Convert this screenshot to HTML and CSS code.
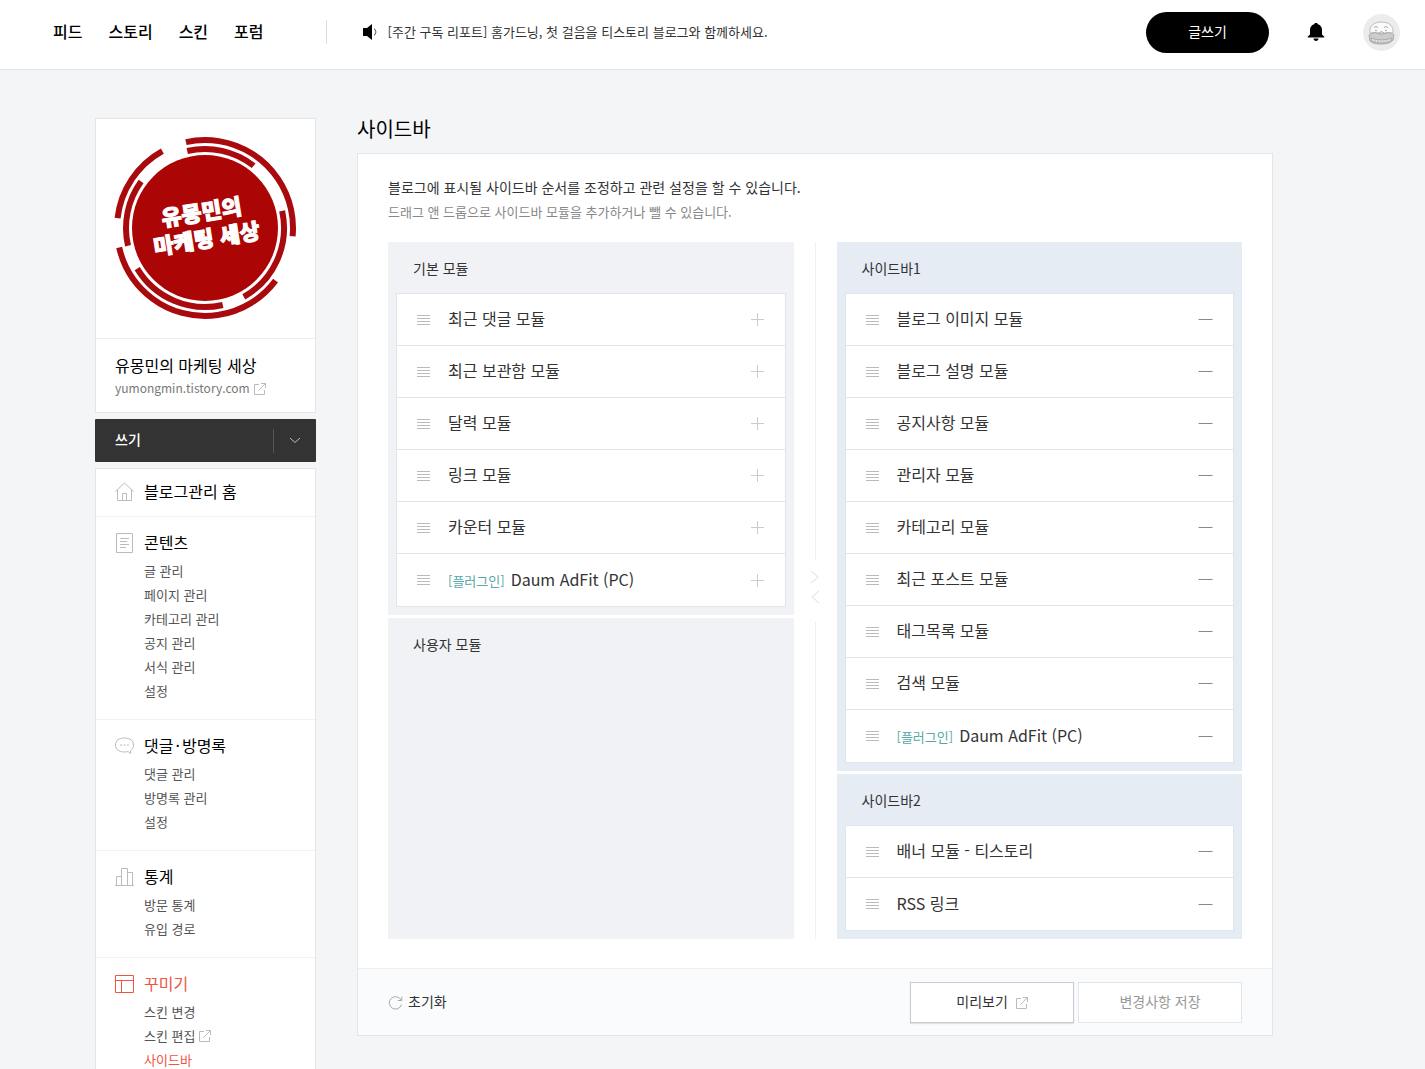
FILE: index.html
```html
<!DOCTYPE html>
<html lang="ko">
<head>
    <meta charset="UTF-8">
    <meta name="viewport" content="width=device-width, initial-scale=1.0">
    <title>사이드바</title>
    <link rel="stylesheet" href="styles.css">
</head>
<body>
    <svg class="icon-defs" aria-hidden="true">
        <symbol id="icon-grip" viewBox="0 0 13 12">
            <path d="M0 1.5h13M0 4.5h13M0 7.5h13M0 10.5h13" fill="none" stroke="currentColor"/>
        </symbol>
        <symbol id="icon-plus" viewBox="0 0 15 15">
            <path d="M7.5 1v13M1 7.5h13" fill="none" stroke="currentColor"/>
        </symbol>
        <symbol id="icon-minus" viewBox="0 0 15 15">
            <path d="M0.5 7.5h14" fill="none" stroke="currentColor"/>
        </symbol>
        <symbol id="icon-external" viewBox="0 0 12 12">
            <path d="M5 1.5H0.5v10h10V7M7 0.5h4.5V5M11.5 0.5L4.5 7.5" fill="none" stroke="currentColor"/>
        </symbol>
    </svg>

    <header class="header">
        <nav class="gnb">
            <a href="#">피드</a>
            <a href="#">스토리</a>
            <a href="#">스킨</a>
            <a href="#">포럼</a>
        </nav>
        <a href="#" class="notice">
            <svg class="icon-speaker" viewBox="0 0 17 16" width="17" height="16">
                <path d="M1 4h4l5-4v16l-5-4H1z" fill="#000"/>
                <path d="M12.5 4.5q3 3.5 0 7" fill="none" stroke="#555"/>
            </svg>
            [주간 구독 리포트] 홈가드닝, 첫 걸음을 티스토리 블로그와 함께하세요.
        </a>
        <button type="button" class="btn-post">글쓰기</button>
        <button type="button" class="btn-bell" aria-label="알림">
            <svg viewBox="0 0 18 20" width="18" height="20">
                <path d="M9 1c1 0 1.6.5 1.9 1.2C13.6 3 15 5.2 15 8v4.500l2.300 2.300v.7H.7v-.7L3 12.500V8c0-2.800 1.400-5 4.100-5.800C7.400 1.500 8 1 9 1z"/>
                <path d="M6.500 16.500h5c0 1.500-1 2.500-2.500 2.500s-2.500-1-2.500-2.500z"/>
            </svg>
        </button>
        <button type="button" class="btn-profile" aria-label="프로필">
            <svg viewBox="0 0 37 37" width="37" height="37">
                <circle cx="18.5" cy="18.5" r="18.5" fill="#ececec"/>
                <path d="M7 19c-1-7 4-11 11.500-11S31 12 30 19z" fill="#fafafa" stroke="#bbb"/>
                <path d="M6 21c2-2 5-3 8-2 3 1.500 6 1.500 9 0 3-1 6 0 8 2l-1 5c-3 3-6 4-12 4s-9-1-11-3z" fill="#ccc" stroke="#aaa"/>
                <path d="M8 24c7 2.500 14 2.500 21 0l-.5 3c-6 2.500-13 2.500-20 0z" fill="#e4e4e4" stroke="#aaa"/>
                <path d="M12 25.500v2.500M15 26v2.500M18 26.500V29M21 26.500V29M24 26v2.500M27 25.500v2" stroke="#bbb" fill="none"/>
                <path d="M11 13.500q2-2 4 0M21 13.500q2-2 4 0M12 16.500h2M22 16.500h2M16 19q2.500-3 5 0" stroke="#aaa" fill="none"/>
            </svg>
        </button>
    </header>

    <div class="container">
        <aside class="sidebar">
            <div class="blog-card">
                <svg class="blog-logo" viewBox="0 0 219 219">
                    <circle cx="109" cy="109" r="73" class="logo-disc"/>
                    <g class="logo-ring" transform="translate(109 109)">
                        <circle r="88" pathLength="360" stroke-dasharray="108 252" transform="rotate(-102.5)"/>
                        <circle r="88" pathLength="360" stroke-dasharray="54.5 305.5" transform="rotate(186.5)"/>
                        <circle r="88" pathLength="360" stroke-dasharray="130.5 229.5" transform="rotate(36.7)"/>
                        <circle r="79" pathLength="360" stroke-dasharray="51 309" transform="rotate(-103)"/>
                        <circle r="79" pathLength="360" stroke-dasharray="49 311" transform="rotate(167)"/>
                        <circle r="79" pathLength="360" stroke-dasharray="72 288" transform="rotate(77)"/>
                        <circle r="79" pathLength="360" stroke-dasharray="73 287" transform="rotate(-12.5)"/>
                    </g>
                    <g class="logo-text" transform="translate(109 109) rotate(-9)">
                        <text x="-1" y="-8">유몽민의</text>
                        <text x="0" y="19">마케팅 세상</text>
                    </g>
                </svg>
                <div class="blog-info">
                    <a href="#" class="blog-name">유몽민의 마케팅 세상</a>
                    <a href="#" class="blog-url">yumongmin.tistory.com
                        <svg class="icon-external"><use href="#icon-external"/></svg>
                    </a>
                </div>
            </div>

            <div class="write-bar">
                <a href="#" class="write-link">쓰기</a>
                <button type="button" class="write-more" aria-label="더보기">
                    <svg viewBox="0 0 12 7" width="12" height="7"><path d="M1 1l5 4.5L11 1" fill="none" stroke="#bbb"/></svg>
                </button>
            </div>

            <nav class="menu">
                <div class="menu-group menu-home">
                    <a href="#" class="menu-title">
                        <svg class="menu-icon" viewBox="0 0 19 20"><path d="M0.5 9.5L9.5 1l9 8.5M2.5 8v10.5h14V8M7.5 18.5v-7h4v7"/></svg>
                        <span>블로그관리 홈</span>
                    </a>
                </div>
                <div class="menu-group">
                    <a href="#" class="menu-title">
                        <svg class="menu-icon" viewBox="0 0 19 20"><path d="M1.5 0.5h16v19h-16zM5 5.5h9M5 8.5h7M5 11.5h9M5 14.5h6"/></svg>
                        <span>콘텐츠</span>
                    </a>
                    <ul>
                        <li><a href="#">글 관리</a></li>
                        <li><a href="#">페이지 관리</a></li>
                        <li><a href="#">카테고리 관리</a></li>
                        <li><a href="#">공지 관리</a></li>
                        <li><a href="#">서식 관리</a></li>
                        <li><a href="#">설정</a></li>
                    </ul>
                </div>
                <div class="menu-group">
                    <a href="#" class="menu-title">
                        <svg class="menu-icon" viewBox="0 0 19 20"><path d="M9.5 2C4 2 .5 4.500.5 9s3.500 7 9 7c1.500 0 2.500-.2 3.500-.5l2.500 2v-3c2-1.200 3-3 3-5.500 0-4.500-3.500-7-9-7zM5 9h2M8.500 9h2M12 9h2"/></svg>
                        <span>댓글<i>·</i>방명록</span>
                    </a>
                    <ul>
                        <li><a href="#">댓글 관리</a></li>
                        <li><a href="#">방명록 관리</a></li>
                        <li><a href="#">설정</a></li>
                    </ul>
                </div>
                <div class="menu-group">
                    <a href="#" class="menu-title">
                        <svg class="menu-icon" viewBox="0 0 19 20"><path d="M0 18.5h19M1.5 18.5v-9h5M6.5 18.5v-17h6v17M12.5 5.5h5v13"/></svg>
                        <span>통계</span>
                    </a>
                    <ul>
                        <li><a href="#">방문 통계</a></li>
                        <li><a href="#">유입 경로</a></li>
                    </ul>
                </div>
                <div class="menu-group active">
                    <a href="#" class="menu-title">
                        <svg class="menu-icon" viewBox="0 0 19 20"><path d="M0.5 1.5h18v17h-18zM0.5 6.5h18M6.5 6.5v12"/></svg>
                        <span>꾸미기</span>
                    </a>
                    <ul>
                        <li><a href="#">스킨 변경</a></li>
                        <li><a href="#">스킨 편집 <svg class="icon-external"><use href="#icon-external"/></svg></a></li>
                        <li class="current"><a href="#">사이드바</a></li>
                    </ul>
                </div>
            </nav>
        </aside>

        <main class="content">
            <h1>사이드바</h1>
            <section class="panel">
                <div class="panel-body">
                    <p class="desc">블로그에 표시될 사이드바 순서를 조정하고 관련 설정을 할 수 있습니다.</p>
                    <p class="desc-sub">드래그 앤 드롭으로 사이드바 모듈을 추가하거나 뺄 수 있습니다.</p>

                    <div class="board">
                        <div class="column">
                            <div class="box">
                                <h2>기본 모듈</h2>
                                <ul class="modules">
                                    <li><svg class="grip"><use href="#icon-grip"/></svg><span>최근 댓글 모듈</span><button type="button" aria-label="추가"><svg><use href="#icon-plus"/></svg></button></li>
                                    <li><svg class="grip"><use href="#icon-grip"/></svg><span>최근 보관함 모듈</span><button type="button" aria-label="추가"><svg><use href="#icon-plus"/></svg></button></li>
                                    <li><svg class="grip"><use href="#icon-grip"/></svg><span>달력 모듈</span><button type="button" aria-label="추가"><svg><use href="#icon-plus"/></svg></button></li>
                                    <li><svg class="grip"><use href="#icon-grip"/></svg><span>링크 모듈</span><button type="button" aria-label="추가"><svg><use href="#icon-plus"/></svg></button></li>
                                    <li><svg class="grip"><use href="#icon-grip"/></svg><span>카운터 모듈</span><button type="button" aria-label="추가"><svg><use href="#icon-plus"/></svg></button></li>
                                    <li><svg class="grip"><use href="#icon-grip"/></svg><span><em>[플러그인]</em>Daum AdFit (PC)</span><button type="button" aria-label="추가"><svg><use href="#icon-plus"/></svg></button></li>
                                </ul>
                            </div>
                            <div class="box box-empty">
                                <h2>사용자 모듈</h2>
                            </div>
                        </div>

                        <div class="divider">
                            <svg viewBox="0 0 10 34" width="10" height="34"><path d="M1 1l7 6-7 6M9 21l-7 6 7 6" fill="none" stroke="#ddd"/></svg>
                        </div>

                        <div class="column column-used">
                            <div class="box">
                                <h2>사이드바1</h2>
                                <ul class="modules">
                                    <li><svg class="grip"><use href="#icon-grip"/></svg><span>블로그 이미지 모듈</span><button type="button" aria-label="빼기"><svg><use href="#icon-minus"/></svg></button></li>
                                    <li><svg class="grip"><use href="#icon-grip"/></svg><span>블로그 설명 모듈</span><button type="button" aria-label="빼기"><svg><use href="#icon-minus"/></svg></button></li>
                                    <li><svg class="grip"><use href="#icon-grip"/></svg><span>공지사항 모듈</span><button type="button" aria-label="빼기"><svg><use href="#icon-minus"/></svg></button></li>
                                    <li><svg class="grip"><use href="#icon-grip"/></svg><span>관리자 모듈</span><button type="button" aria-label="빼기"><svg><use href="#icon-minus"/></svg></button></li>
                                    <li><svg class="grip"><use href="#icon-grip"/></svg><span>카테고리 모듈</span><button type="button" aria-label="빼기"><svg><use href="#icon-minus"/></svg></button></li>
                                    <li><svg class="grip"><use href="#icon-grip"/></svg><span>최근 포스트 모듈</span><button type="button" aria-label="빼기"><svg><use href="#icon-minus"/></svg></button></li>
                                    <li><svg class="grip"><use href="#icon-grip"/></svg><span>태그목록 모듈</span><button type="button" aria-label="빼기"><svg><use href="#icon-minus"/></svg></button></li>
                                    <li><svg class="grip"><use href="#icon-grip"/></svg><span>검색 모듈</span><button type="button" aria-label="빼기"><svg><use href="#icon-minus"/></svg></button></li>
                                    <li><svg class="grip"><use href="#icon-grip"/></svg><span><em>[플러그인]</em>Daum AdFit (PC)</span><button type="button" aria-label="빼기"><svg><use href="#icon-minus"/></svg></button></li>
                                </ul>
                            </div>
                            <div class="box">
                                <h2>사이드바2</h2>
                                <ul class="modules">
                                    <li><svg class="grip"><use href="#icon-grip"/></svg><span>배너 모듈 - 티스토리</span><button type="button" aria-label="빼기"><svg><use href="#icon-minus"/></svg></button></li>
                                    <li><svg class="grip"><use href="#icon-grip"/></svg><span>RSS 링크</span><button type="button" aria-label="빼기"><svg><use href="#icon-minus"/></svg></button></li>
                                </ul>
                            </div>
                        </div>
                    </div>
                </div>

                <div class="panel-footer">
                    <button type="button" class="btn-reset">
                        <svg viewBox="0 0 15 14" width="15" height="14"><path d="M13 4A6.200 6.200 0 1 0 13.500 8.500M13.800 0.500v4h-4" fill="none" stroke="#aaa"/></svg>
                        <span>초기화</span>
                    </button>
                    <button type="button" class="btn btn-preview">미리보기 <svg class="icon-external"><use href="#icon-external"/></svg></button>
                    <button type="button" class="btn btn-save">변경사항 저장</button>
                </div>
            </section>
        </main>
    </div>
</body>
</html>
```
FILE: styles.css
```css
* {
    box-sizing: border-box;
}

html {
    scrollbar-width: none;
}

body {
    margin: 0;
    background-color: #f3f5f7;
    color: #333;
    font-family: "Noto Sans CJK KR", "Noto Sans", sans-serif;
    font-size: 14px;
    line-height: 24px;
}

a {
    color: inherit;
    text-decoration: none;
}

button {
    padding: 0;
    border: none;
    background: none;
    color: inherit;
    font: inherit;
    cursor: pointer;
}

ul {
    margin: 0;
    padding: 0;
    list-style: none;
}

h1, h2, p {
    margin: 0;
    font-weight: 400;
}

svg {
    display: block;
    flex: none;
}

.icon-defs {
    display: none;
}

.icon-external {
    display: inline-block;
    width: 12px;
    height: 12px;
    color: #bbb;
    vertical-align: -1px;
}

/* header */
.header {
    display: flex;
    align-items: center;
    height: 70px;
    padding: 0 25px 5px 53px;
    border-bottom: 1px solid #e3e5e8;
    background-color: #fff;
}

.gnb {
    display: flex;
    gap: 26px;
    padding-right: 62px;
    border-right: 1px solid #ddd;
    color: #000;
    font-size: 16px;
    font-weight: 500;
    line-height: 22px;
    padding-bottom: 2px;
}

.notice {
    display: flex;
    align-items: center;
    gap: 9px;
    margin-left: 35px;
    font-size: 13px;
}

.btn-post {
    width: 123px;
    height: 41px;
    margin-left: auto;
    padding-bottom: 2px;
    border-radius: 21px;
    background-color: #000;
    color: #fff;
}

.btn-bell {
    margin: 0 38px;
}

/* layout */
.container {
    display: grid;
    grid-template-columns: 221px 1fr;
    gap: 41px;
    align-items: start;
    padding: 48px 152px 0 95px;
}

/* left menu */
.blog-card {
    border: 1px solid #e3e5e8;
    background-color: #fff;
}

.blog-logo {
    width: 100%;
}

.logo-disc {
    fill: #ab0505;
}

.logo-ring {
    fill: none;
    stroke: #a80a0e;
    stroke-width: 6px;
}

.logo-text {
    fill: #fff;
    stroke: #fff;
    stroke-width: 1px;
    font-size: 22px;
    font-weight: 900;
    text-anchor: middle;
}

.blog-info {
    padding: 14px 19px 13px;
    border-top: 1px solid #eceef0;
}

.blog-name {
    display: block;
    color: #000;
    font-size: 16px;
}

.blog-url {
    display: block;
    color: #777;
    font-size: 12px;
    line-height: 22px;
}

.blog-url .icon-external {
    margin-left: 1px;
    vertical-align: -2px;
}

.write-bar {
    display: flex;
    align-items: center;
    height: 43px;
    margin: 6px 0;
    padding-left: 20px;
    border-radius: 1px;
    background-color: #333;
}

.write-link {
    flex: 1;
    padding-bottom: 4px;
    color: #fff;
    font-weight: 500;
}

.write-more {
    display: flex;
    align-items: center;
    justify-content: center;
    width: 43px;
    height: 24px;
    border-left: 1px solid #555;
}

.menu {
    border: 1px solid #e3e5e8;
    border-bottom: none;
    background-color: #fff;
}

.menu-group {
    padding: 14px 19px 16px;
    border-bottom: 1px solid #f0f1f3;
}

.menu-home {
    padding: 11px 19px 12px;
}

.menu-title {
    display: flex;
    align-items: center;
    gap: 10px;
    height: 24px;
    color: #000;
    font-size: 16px;
}

.menu-title span {
    padding-bottom: 2px;
}

.menu-title i {
    margin: 0 2px;
    font-style: normal;
}

.menu-icon {
    width: 19px;
    height: 20px;
    fill: none;
    stroke: #bbb;
}

.menu-group ul {
    margin-top: 4px;
    padding-left: 29px;
    color: #555;
    font-size: 13px;
}

.active {
    padding-bottom: 0;
    border-bottom: none;
}

.active .menu-title,
.menu .current {
    color: #ef5444;
}

.active .menu-icon {
    stroke: #ef5444;
}

/* content */
h1 {
    margin-bottom: 13px;
    color: #000;
    font-size: 20px;
    line-height: 22px;
}

.panel {
    border: 1px solid #e3e5e8;
    background-color: #fff;
}

.panel-body {
    padding: 21px 30px 29px;
}

.desc {
    margin-bottom: 1px;
}

.desc-sub {
    color: #888;
    font-size: 13px;
}

.board {
    display: grid;
    grid-template-columns: 1fr 43px 1fr;
    margin-top: 18px;
}

.column {
    display: flex;
    flex-direction: column;
    gap: 3px;
}

.box {
    padding: 0 8px 8px;
    background-color: #f1f2f6;
}

.box-empty {
    flex: 1;
}

.box h2 {
    padding: 14px 17px 13px;
    font-size: 14px;
}

.modules {
    border: 1px solid #e2e4e9;
    background-color: #fff;
}

.modules li {
    display: flex;
    align-items: center;
    height: 52px;
    padding: 0 20px;
    border-bottom: 1px solid #e2e4e9;
    font-size: 16px;
}

.modules li:last-child {
    border-bottom: none;
}

.modules span {
    flex: 1;
    padding-bottom: 3px;
}

.modules em {
    margin-right: 6px;
    color: #58a9a5;
    font-size: 13px;
    font-style: normal;
    line-height: 1;
}

.grip {
    width: 13px;
    height: 12px;
    margin-right: 18px;
    color: #bbb;
}

.modules button {
    color: #ccc;
}

.modules button svg {
    width: 15px;
    height: 15px;
}

.column-used .box {
    background-color: #e5ecf4;
}

.column-used .modules {
    border-color: #dfe5ec;
}

.column-used .modules button {
    color: #888;
}

.divider {
    display: flex;
    flex-direction: column;
    align-items: center;
    gap: 10px;
}

.divider svg {
    margin-bottom: 8px;
}

.divider::before,
.divider::after {
    content: "";
    flex: 1;
    border-left: 1px solid #f0f0f2;
}

.panel-footer {
    display: flex;
    align-items: center;
    gap: 4px;
    padding: 13px 30px 12px;
    border-top: 1px solid #eceef0;
    background-color: #fafbfd;
}

.btn-reset {
    display: flex;
    align-items: center;
    gap: 5px;
    margin-right: auto;
}

.btn-reset span {
    padding-bottom: 3px;
}

.btn {
    width: 164px;
    height: 41px;
    padding-bottom: 3px;
    border: 1px solid #e3e5e8;
    background-color: #fff;
}

.btn-preview {
    border-color: #c8cbd2;
    box-shadow: 0 1px 1px rgba(0, 0, 0, 0.1);
}

.btn-preview .icon-external {
    margin-left: 4px;
    vertical-align: -2px;
}

.btn-save {
    color: #999;
}
```
